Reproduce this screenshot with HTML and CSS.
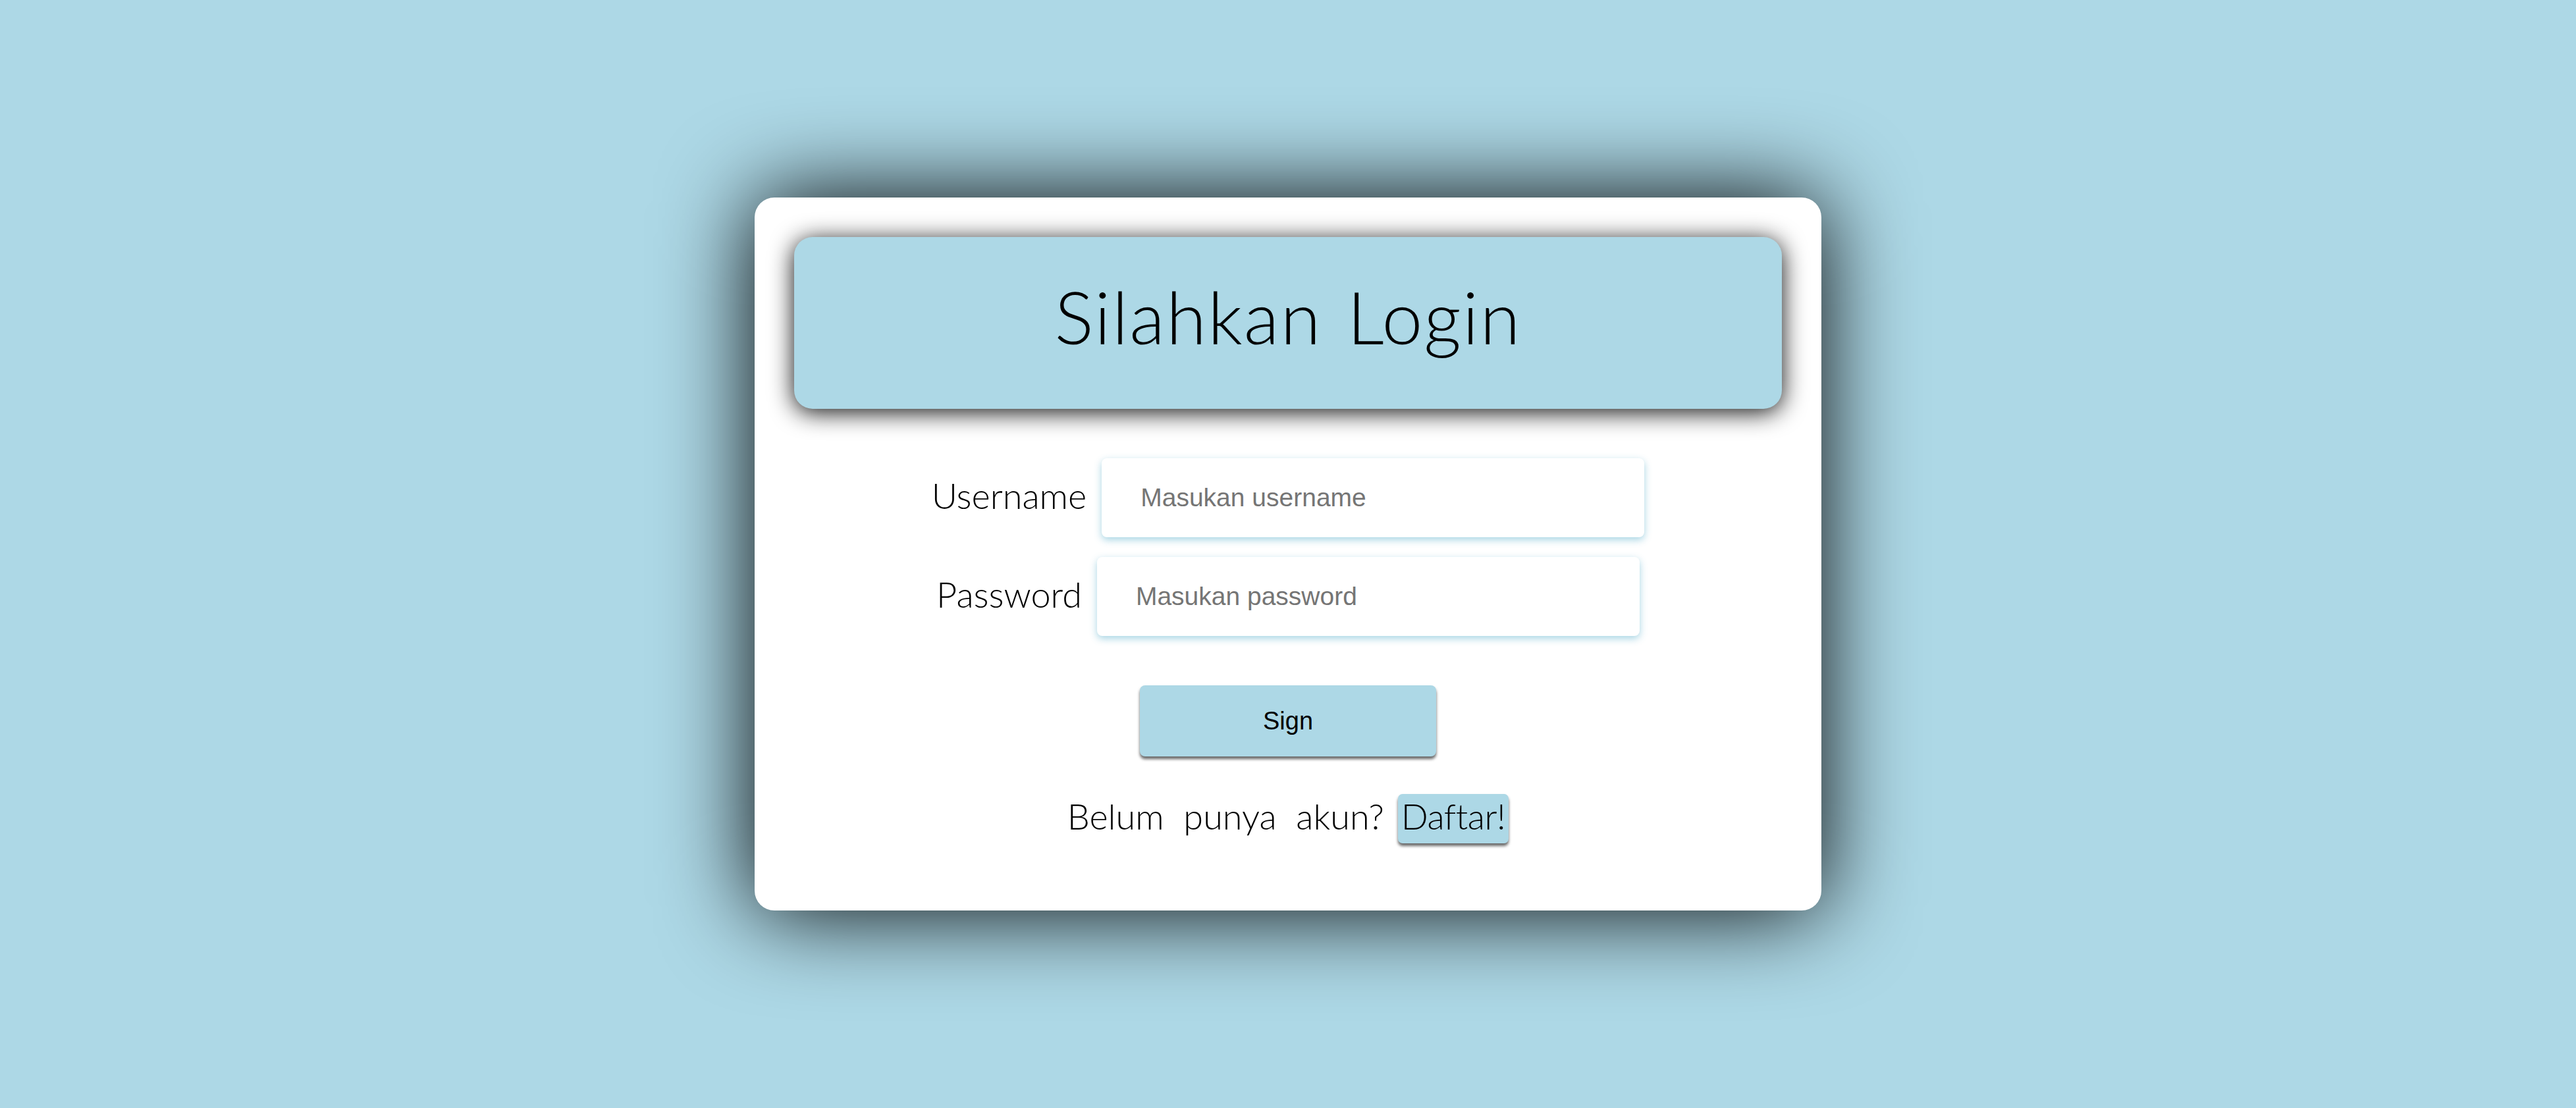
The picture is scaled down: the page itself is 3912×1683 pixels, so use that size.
FILE: index.html
```html
<!DOCTYPE html>
<html lang="id">
<head>
<meta charset="utf-8">
<title>Silahkan Login</title>
<link rel="stylesheet" href="styles.css">
</head>
<body>
  <main class="card">
    <header class="card-header">
      <h1 class="title">Silahkan Login</h1>
    </header>
    <form class="login-form">
      <div class="field-row">
        <label class="field-label" for="username">Username</label>
        <input class="field-input" id="username" type="text" placeholder="Masukan username">
      </div>
      <div class="field-row">
        <label class="field-label" for="password">Password</label>
        <input class="field-input" id="password" type="password" placeholder="Masukan password">
      </div>
      <button class="sign-btn" type="button">Sign</button>
      <p class="register-line">
        <span>Belum punya akun?</span>
        <a class="register-link" href="#">Daftar!</a>
      </p>
    </form>
  </main>
</body>
</html>
```

FILE: styles.css
```css
html, body {
  margin: 0;
  padding: 0;
}

body {
  background: #add8e6;
  min-height: 100vh;
  display: flex;
  align-items: center;
  justify-content: center;
  font-family: "Lato", "Noto Sans", sans-serif;
  font-weight: 300;
  color: #000;
}

.card {
  width: 1620px;
  box-sizing: border-box;
  padding: 60px 60px 102px;
  background: #fff;
  border-radius: 30px;
  box-shadow: 0 0 140px #000;
  display: flex;
  flex-direction: column;
}

.card-header {
  height: 261px;
  background: #add8e6;
  border-radius: 28px;
  box-shadow: 0 5px 36px rgba(0, 0, 0, 0.95);
  display: flex;
  align-items: center;
  justify-content: center;
}

.title {
  margin: 0 0 20px;
  font-family: "Lato", "Noto Sans", sans-serif;
  font-weight: 300;
  font-size: 111px;
  line-height: 1;
  letter-spacing: 2px;
  word-spacing: 6px;
}

.login-form {
  display: flex;
  flex-direction: column;
  align-items: center;
  margin-top: 75px;
}

.field-row {
  display: flex;
  align-items: center;
  justify-content: center;
  gap: 23px;
  height: 120px;
}

.field-row + .field-row {
  margin-top: 30px;
}

.field-label {
  font-size: 54px;
  font-weight: 300;
  line-height: 1;
  margin-top: -6px;
}

.field-input {
  width: 824px;
  height: 120px;
  box-sizing: border-box;
  border: none;
  border-radius: 8px;
  padding: 0 0 0 59px;
  background: #fff;
  font-family: "Liberation Sans", Arial, sans-serif;
  font-size: 39px;
  color: #000;
  box-shadow: 0 4px 12px rgba(150, 205, 222, 0.85);
  outline: none;
}

.field-input::placeholder {
  color: #757575;
}

.sign-btn {
  margin-top: 75px;
  width: 450px;
  height: 108px;
  border: none;
  border-radius: 8px;
  background: #add8e6;
  font-family: "Liberation Sans", Arial, sans-serif;
  font-size: 38px;
  color: #000;
  box-shadow: 0 4px 4px rgba(0, 0, 0, 0.6);
  cursor: pointer;
}

.register-line {
  margin: 57px 0 0;
  height: 75px;
  display: flex;
  align-items: center;
  gap: 21px;
  font-size: 54px;
  font-weight: 300;
  word-spacing: 15px;
}

.register-line span {
  margin-top: -8px;
}

.register-link {
  height: 75px;
  box-sizing: border-box;
  padding: 0 5px 8px;
  display: flex;
  align-items: center;
  background: #add8e6;
  border-radius: 7px;
  box-shadow: 0 4px 4px rgba(0, 0, 0, 0.6);
  color: #000;
  text-decoration: none;
  line-height: 1;
  letter-spacing: -0.5px;
}
```
